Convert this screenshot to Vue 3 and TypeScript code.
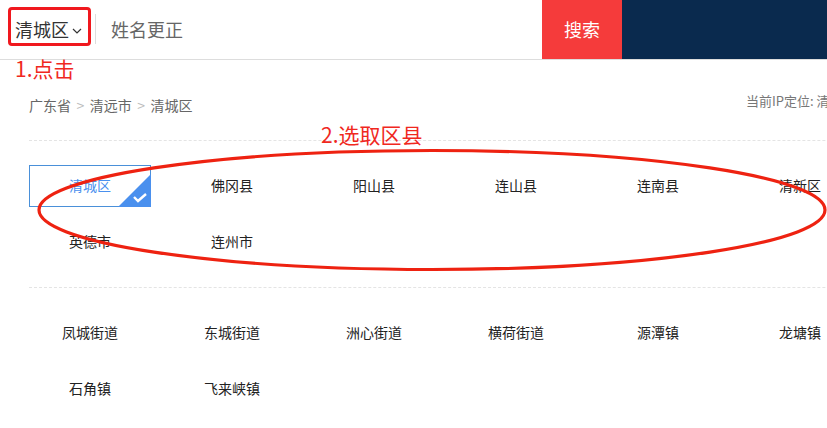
<script setup lang="ts">
const cities = ['清城区', '佛冈县', '阳山县', '连山县', '连南县', '清新区', '英德市', '连州市']
const towns = ['凤城街道', '东城街道', '洲心街道', '横荷街道', '源潭镇', '龙塘镇', '石角镇', '飞来峡镇']
</script>

<template>
  <div class="page">
    <header class="top">
      <div class="area">
        <span>清城区</span>
        <svg class="arrow" width="10" height="6" viewBox="0 0 10 6"><path d="M1 1l4 4 4-4" fill="none" stroke="#333" stroke-width="1.2" /></svg>
      </div>
      <div class="keyword">姓名更正</div>
      <button class="search">搜索</button>
      <div class="dark"></div>
    </header>

    <div class="content">
      <div class="crumb-row">
        <div class="crumbs">
          <span>广东省</span><i>&gt;</i><span>清远市</span><i>&gt;</i><span>清城区</span>
        </div>
        <div class="ip">当前IP定位: 清远市</div>
      </div>

      <div class="grid first">
        <div v-for="(c, i) in cities" :key="c" class="cell" :class="{ active: i === 0 }">
          {{ c }}
          <svg v-if="i === 0" class="tick" width="33" height="33" viewBox="0 0 33 33">
            <path d="M33 0V33H0Z" fill="#4a90ee" />
            <path d="M16 23l4 4 8-7" fill="none" stroke="#fff" stroke-width="2.4" />
          </svg>
        </div>
      </div>

      <div class="grid second">
        <div v-for="t in towns" :key="t" class="cell">{{ t }}</div>
      </div>
    </div>

    <!-- annotations on top of the screenshot -->
    <div class="mark-box"></div>
    <div class="note note-1">1.点击</div>
    <div class="note note-2">2.选取区县</div>
    <svg class="oval" width="827" height="428" viewBox="0 0 827 428">
      <ellipse cx="432" cy="210" rx="393" ry="59.5" fill="none" stroke="#ee2211" stroke-width="3.2" />
    </svg>
  </div>
</template>

<style>
html,
body {
  margin: 0;
  overflow: hidden;
  background: #fff;
}
</style>

<style scoped>
.page {
  position: relative;
  width: 827px;
  height: 428px;
  overflow: hidden;
  background: #fff;
  font-family: "Noto Sans CJK SC", "Liberation Sans", sans-serif;
  color: #333;
}

.top {
  display: flex;
  height: 59px;
  border-bottom: 1px solid #ddd;
}

.area {
  width: 95px;
  box-sizing: border-box;
  padding: 0 0 1px 15px;
  display: flex;
  align-items: center;
  font-size: 18px;
}

.arrow {
  margin-left: 3px;
  margin-top: 4px;
}

.keyword {
  width: 447px;
  box-sizing: border-box;
  padding-left: 16px;
  line-height: 59px;
  font-size: 18px;
  color: #666;
  position: relative;
}

.keyword::before {
  content: '';
  position: absolute;
  left: 0;
  top: 14px;
  height: 30px;
  width: 1px;
  background: #ddd;
}

.search {
  width: 80px;
  height: 59px;
  border: none;
  padding: 0 0 2px;
  background: #f53b3b;
  color: #fff;
  font-family: inherit;
  font-size: 18px;
}

.dark {
  flex: 1;
  background: #0a2a4e;
}

.content {
  width: 1000px;
  padding-left: 29px;
  box-sizing: border-box;
}

.crumb-row {
  display: flex;
  padding-top: 35px;
  height: 81px;
  box-sizing: border-box;
  font-size: 14px;
  line-height: 20px;
  color: #666;
  border-bottom: 1px dashed #e4e4e4;
}

.crumbs {
  width: 717px;
}

.crumbs i {
  font-style: normal;
  color: #bbb;
  margin: 0 5.5px;
}

.ip {
  font-size: 13px;
  white-space: nowrap;
  color: #777;
  margin-top: -4px;
}

.grid {
  display: grid;
  grid-template-columns: repeat(6, 122px);
  grid-auto-rows: 42px;
  column-gap: 20px;
  row-gap: 14px;
  font-size: 14px;
  color: #222;
}

.first {
  padding: 24px 0;
  height: 147px;
  box-sizing: border-box;
  border-bottom: 1px dashed #e4e4e4;
  align-content: start;
}

.second {
  padding-top: 24px;
}

.cell {
  position: relative;
  display: flex;
  align-items: center;
  justify-content: center;
  box-sizing: border-box;
  padding-bottom: 3px;
}

.cell.active {
  border: 1px solid #4a90d9;
  color: #4a90ee;
}

.tick {
  position: absolute;
  right: -1px;
  bottom: -1px;
}

.mark-box {
  position: absolute;
  left: 8px;
  top: 7px;
  width: 83px;
  height: 39px;
  box-sizing: border-box;
  border: 3px solid #f0181e;
  border-radius: 4px;
}

.note {
  position: absolute;
  color: #f0281e;
  font-size: 21px;
  line-height: 24px;
  white-space: nowrap;
}

.note-1 {
  left: 15px;
  top: 56px;
}

.note-2 {
  left: 321px;
  top: 122px;
}

.oval {
  position: absolute;
  left: 0;
  top: 0;
  pointer-events: none;
}
</style>
